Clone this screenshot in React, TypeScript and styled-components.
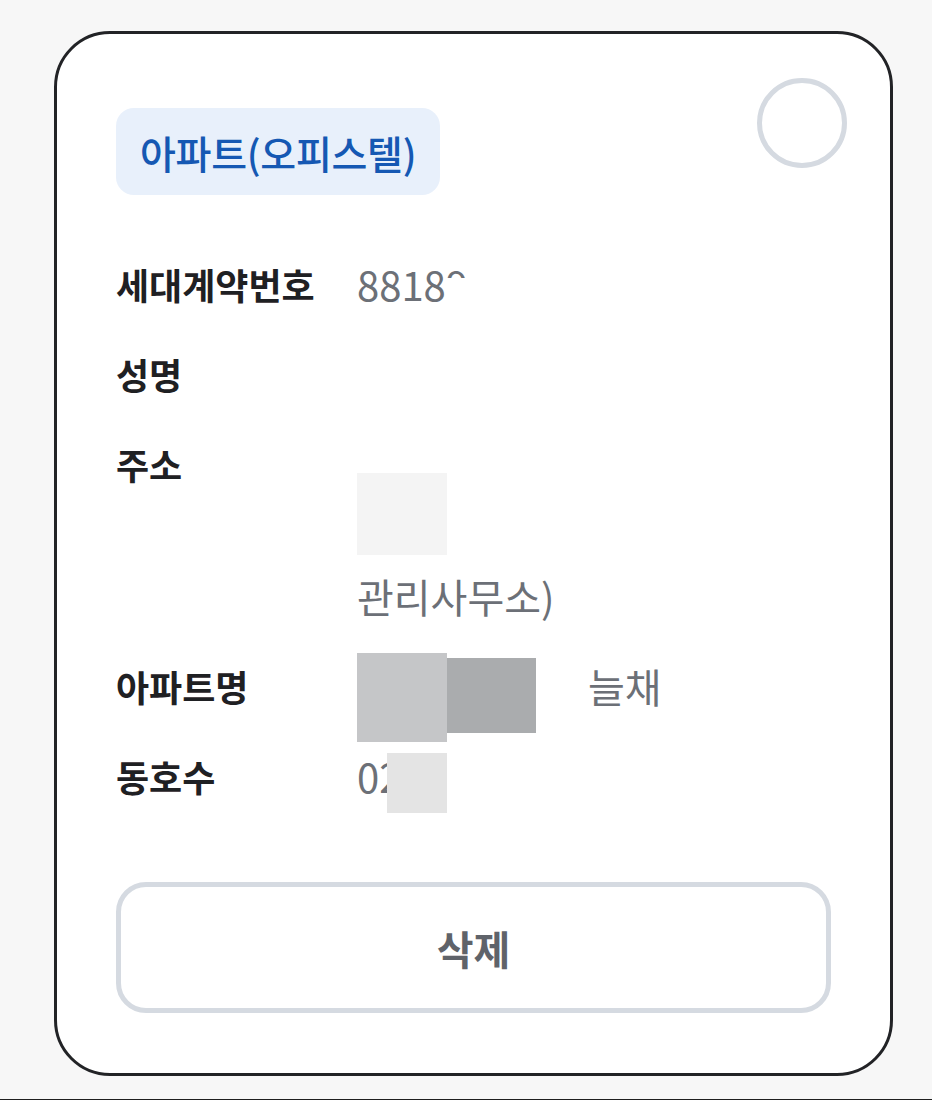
import React from 'react';
import styled, { createGlobalStyle } from 'styled-components';

const GlobalStyle = createGlobalStyle`
  html, body {
    margin: 0;
    padding: 0;
    background: #f7f7f7;
  }
  body {
    font-family: 'Noto Sans CJK KR', 'Noto Sans', sans-serif;
  }
`;

const Page = styled.div`
  box-sizing: border-box;
  height: 1100px;
  padding: 31px 0 0 54px;
  border-bottom: 1px solid #1f1f1f;
`;

const Card = styled.div`
  box-sizing: border-box;
  width: 839px;
  height: 1045px;
  background: #ffffff;
  border: 3px solid #222326;
  border-radius: 56px;
  padding: 74px 59px 60px 59px;
  display: flex;
  flex-direction: column;
`;

const Header = styled.div`
  display: flex;
  justify-content: space-between;
  align-items: flex-start;
`;

const TypeBadge = styled.div`
  box-sizing: border-box;
  height: 87px;
  padding: 0 24px;
  display: flex;
  align-items: center;
  background: #e8f0fb;
  border-radius: 18px;
  color: #1558b3;
  font-size: 39px;
  font-weight: 500;
  letter-spacing: -0.3px;
`;

const SelectCircle = styled.div`
  box-sizing: border-box;
  width: 90px;
  height: 90px;
  margin: -30px -16px 0 0;
  border: 5px solid #d5dae1;
  border-radius: 50%;
`;

const InfoList = styled.dl`
  margin: 56px 0 0 0;
  display: flex;
  flex-direction: column;
  gap: 24px;
`;

const Row = styled.div`
  display: grid;
  grid-template-columns: 241px 1fr;
  line-height: 66px;
`;

const Label = styled.dt`
  margin: 0;
  font-size: 36px;
  font-weight: 700;
  color: #1f2023;
`;

const Value = styled.dd`
  position: relative;
  margin: 0;
  font-size: 40px;
  font-weight: 400;
  color: #6c7077;
  min-height: 66px;
`;

const ValueLine = styled.div<{ $indent?: number }>`
  height: 66px;
  padding-left: ${(p) => p.$indent ?? 0}px;
  white-space: nowrap;
`;

/* a digit whose lower part is hidden in the source */
const CutDigit = styled.span`
  display: inline-block;
  height: 27px;
  overflow: hidden;
  vertical-align: top;
`;

const Redaction = styled.span<{ $tone: string }>`
  position: absolute;
  background: ${(p) => p.$tone};
`;

const DeleteButton = styled.button`
  box-sizing: border-box;
  margin-top: auto;
  width: 100%;
  height: 131px;
  background: #ffffff;
  border: 5px solid #d5dae1;
  border-radius: 30px;
  font-family: 'Noto Sans CJK KR', 'Noto Sans', sans-serif;
  font-size: 40px;
  font-weight: 700;
  color: #5f636a;
  cursor: pointer;
`;

export default function App(): React.ReactElement {
  return (
    <>
      <GlobalStyle />
      <Page>
        <Card>
          <Header>
            <TypeBadge>아파트(오피스텔)</TypeBadge>
            <SelectCircle />
          </Header>

          <InfoList>
            <Row>
              <Label>세대계약번호</Label>
              <Value>
                <ValueLine>
                  8818<CutDigit>9</CutDigit>
                </ValueLine>
              </Value>
            </Row>
            <Row>
              <Label>성명</Label>
              <Value>
                <ValueLine />
              </Value>
            </Row>
            <Row>
              <Label>주소</Label>
              <Value>
                <ValueLine />
                <ValueLine />
                <ValueLine>관리사무소)</ValueLine>
                {/* masked part of the address */}
                <Redaction $tone="#f4f4f4" style={{ left: 0, top: 42, width: 90, height: 82 }} />
              </Value>
            </Row>
            <Row>
              <Label>아파트명</Label>
              <Value>
                <ValueLine $indent={231}>늘채</ValueLine>
                <Redaction $tone="#c5c6c8" style={{ left: 0, top: 0, width: 90, height: 89 }} />
                <Redaction $tone="#aaacae" style={{ left: 90, top: 5, width: 89, height: 75 }} />
              </Value>
            </Row>
            <Row>
              <Label>동호수</Label>
              <Value>
                <ValueLine>02</ValueLine>
                <Redaction $tone="#e4e4e4" style={{ left: 30, top: 10, width: 60, height: 60 }} />
              </Value>
            </Row>
          </InfoList>

          <DeleteButton type="button">삭제</DeleteButton>
        </Card>
      </Page>
    </>
  );
}
